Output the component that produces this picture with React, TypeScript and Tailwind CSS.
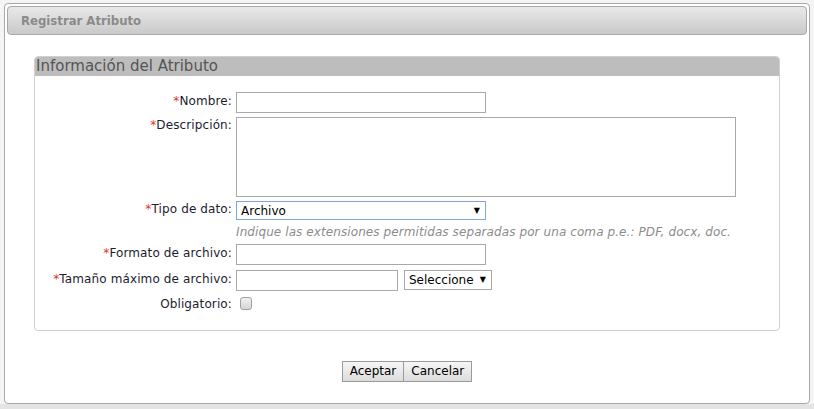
import React from 'react';

const labelCls = "text-right text-[12px] text-[#1c1c2e] leading-[15px] tracking-[0.12px]";

const Req = () => <span className="text-[#e0312c]">*</span>;

export default function App() {
  return (
    <div className="w-[814px] h-[409px] bg-[#e4e4e4] overflow-hidden relative font-['DejaVu_Sans',Verdana,sans-serif]">
      <div className="h-[404px] bg-[#f4f4f4] pl-[4px] pt-[3px] pr-[4px]">
        <div className="w-[806px] h-[401px] bg-white border border-[#a9a9a9] rounded-[4px] px-[2px] pt-[2px] flex flex-col">
          <div className="h-[29px] rounded-[4px] border border-[#a8a8a8] bg-gradient-to-b from-[#e9e9e9] to-[#c9c9c9] flex items-center pl-[13px]">
            <span className="font-['DejaVu_Sans_Condensed','DejaVu_Sans',sans-serif] font-bold text-[13px] text-[#8a8a8a]">
              Registrar Atributo
            </span>
          </div>

          <div className="ml-[27px] mr-[27px] mt-[21px] h-[275px] border border-[#d0d0d0] rounded-[4px] flex flex-col">
            <div className="h-[19px] bg-[#bdbdbd] rounded-t-[3px] pl-[1px] text-[15px] leading-[19px] text-[#555555]">
              Información del Atributo
            </div>

            <div className="grid grid-cols-[197px_1fr] gap-x-[4px] mt-[16px]">
              <div className={labelCls + " pt-[2px]"}><Req />Nombre:</div>
              <div><div className="w-[250px] h-[21px] border border-[#a9a9a9]" /></div>

              <div className={labelCls + " mt-[4px] pt-[1px]"}><Req />Descripción:</div>
              <div className="mt-[4px]"><div className="w-[500px] h-[80px] border border-[#a9a9a9]" /></div>

              <div className={labelCls + " mt-[4px] pt-[1px]"}><Req />Tipo de dato:</div>
              <div className="mt-[4px]">
                <div className="w-[250px] h-[19px] border border-[#7ea6dd] flex items-center justify-between pl-[4px] pr-[5px] text-[12px] text-black">
                  <span>Archivo</span>
                  <span className="text-[8px]">▼</span>
                </div>
                <div className="mt-[3px] h-[18px] text-[12px] italic text-[#8c8c8c] leading-[18px] whitespace-nowrap tracking-[0.09px]">
                  Indique las extensiones permitidas separadas por una coma p.e.: PDF, docx, doc.
                </div>
              </div>

              <div className={labelCls + " mt-[3px] pt-[2px]"}><Req />Formato de archivo:</div>
              <div className="mt-[3px]"><div className="w-[250px] h-[21px] border border-[#a9a9a9]" /></div>

              <div className={labelCls + " mt-[5px] pt-[2px]"}><Req />Tamaño máximo de archivo:</div>
              <div className="mt-[5px] flex items-start gap-[6px]">
                <div className="w-[162px] h-[21px] border border-[#a9a9a9]" />
                <div className="w-[88px] h-[20px] border border-[#a9a9a9] flex items-center justify-between pl-[4px] pr-[5px] text-[12px] text-black">
                  <span>Seleccione</span>
                  <span className="text-[8px]">▼</span>
                </div>
              </div>

              <div className={labelCls + " mt-[6px]"}>Obligatorio:</div>
              <div className="mt-[6px] pl-[4px]">
                <div className="w-[12px] h-[13px] rounded-[3px] border border-[#a0a0a0] bg-gradient-to-b from-[#f0f0f0] to-[#d6d6d6]" />
              </div>
            </div>
          </div>

          <div className="flex justify-center mt-[30px]">
            <button className="h-[21px] px-[7px] border border-[#9a9a9a] bg-gradient-to-b from-[#f6f6f6] to-[#dcdcdc] text-[12px] text-black leading-[19px]">
              Aceptar
            </button>
            <button className="h-[21px] px-[7px] border border-[#9a9a9a] border-l-0 bg-gradient-to-b from-[#f6f6f6] to-[#dcdcdc] text-[12px] text-black leading-[19px]">
              Cancelar
            </button>
          </div>
        </div>
      </div>
    </div>
  );
}
